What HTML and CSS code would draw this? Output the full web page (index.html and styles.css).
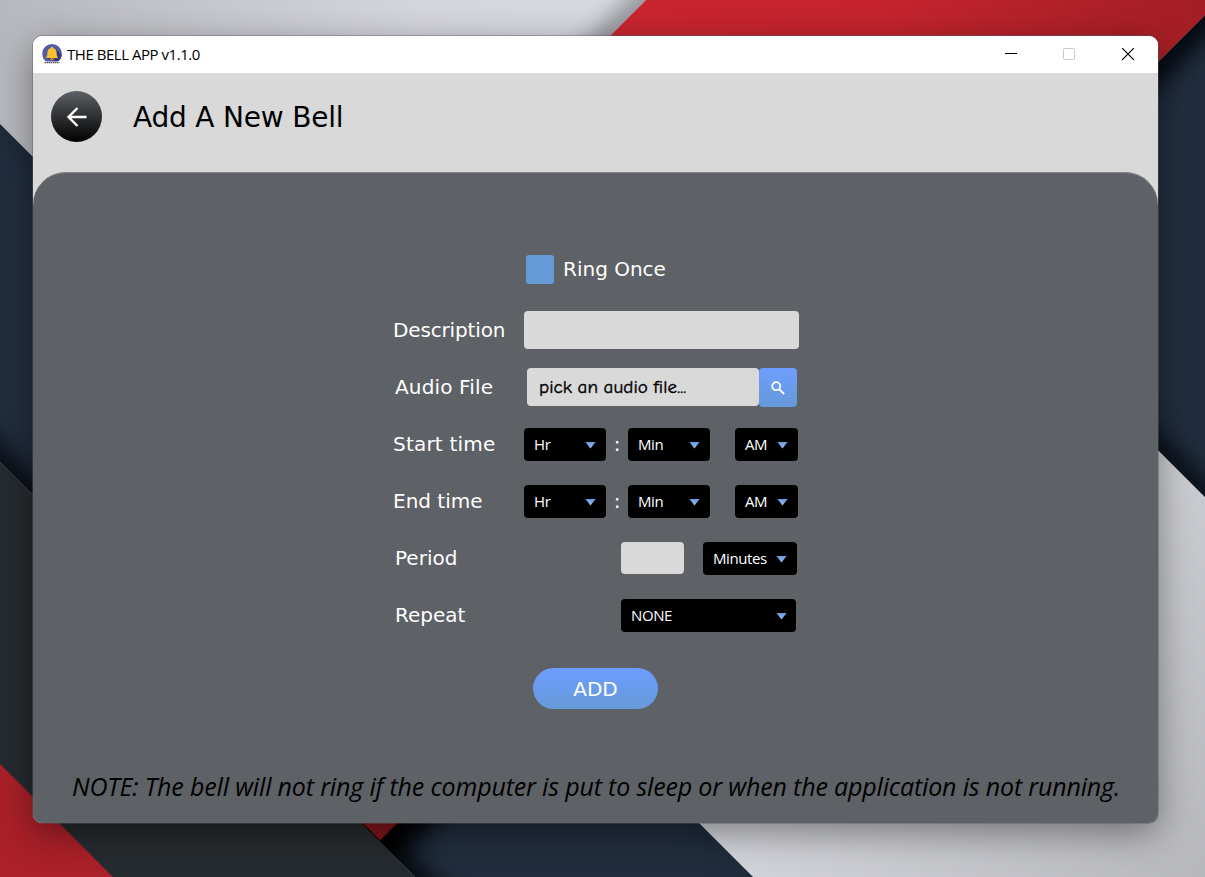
FILE: index.html
```html
<!DOCTYPE html>
<html lang="en">
<head>
<meta charset="utf-8">
<title>THE BELL APP v1.1.0</title>
<link rel="stylesheet" href="styles.css">
</head>
<body>
<svg class="wallpaper" viewBox="0 0 1205 877" aria-hidden="true">
  <defs>
    <filter id="soft" filterUnits="userSpaceOnUse" x="-100" y="-100" width="1405" height="1100" color-interpolation-filters="sRGB"><feGaussianBlur stdDeviation="12"/></filter>
    <linearGradient id="silver" x1="0" y1="0" x2="1" y2="0"><stop offset="0" stop-color="#b7b8bd"/><stop offset=".35" stop-color="#d5d6dc"/><stop offset=".55" stop-color="#d8d9df"/><stop offset="1" stop-color="#cbccd1"/></linearGradient>
    <linearGradient id="corner" gradientUnits="userSpaceOnUse" x1="1000" y1="600" x2="1205" y2="877"><stop offset="0" stop-color="#000" stop-opacity="0"/><stop offset="1" stop-color="#000" stop-opacity=".1"/></linearGradient>
    <linearGradient id="red" gradientUnits="userSpaceOnUse" x1="620" y1="0" x2="1200" y2="40"><stop offset="0" stop-color="#c8252f"/><stop offset=".45" stop-color="#c5242e"/><stop offset="1" stop-color="#a31e26"/></linearGradient>
    <clipPath id="navyLeft"><path d="M0 124L753 877H415L0 462z"/></clipPath>
    <clipPath id="navyRight"><path d="M1205 15V497L700 -8V520z"/></clipPath>
    <clipPath id="silverTop"><path d="M0 0H646L0 646z"/></clipPath>
  </defs>
  <rect width="1205" height="877" fill="url(#silver)"/>
  <rect x="600" y="400" width="605" height="477" fill="url(#corner)"/>
  <g clip-path="url(#silverTop)"><path d="M700 -54L0 646" stroke="#44464c" stroke-opacity=".7" stroke-width="18" filter="url(#soft)"/></g>
  <path d="M0 124L753 877H415L0 462z" fill="#222e3f"/>
  <g clip-path="url(#navyLeft)">
    <path d="M-60 402L475 937" stroke="#05070b" stroke-width="24" filter="url(#soft)"/>
    <path d="M-60 64L813 937" stroke="#0c1722" stroke-opacity=".35" stroke-width="12" filter="url(#soft)"/>
    <path d="M430 790L330 890" stroke="#000" stroke-width="50" filter="url(#soft)"/>
  </g>
  <path d="M1205 15V497L1000 292V220z" fill="#222e3f"/>
  <g clip-path="url(#navyRight)">
    <path d="M1260 -40L1000 220" stroke="#03060b" stroke-width="32" filter="url(#soft)"/>
    <path d="M1000 292L1270 562" stroke="#03060b" stroke-width="22" filter="url(#soft)"/>
  </g>
  <path d="M646 0H1220L380 840L200 660L200 446z" fill="url(#red)"/>
  <path class="red-shade" d="M350 820H402L380 842z"/>
  <path d="M0 462L415 877H0z" fill="#262b2f"/>
  <path d="M0 764L113 877H0z" fill="#ab2029"/>
</svg>

<main class="window">
  <header class="titlebar">
    <svg class="app-icon" viewBox="0 0 20 20">
      <circle cx="10" cy="9.8" r="9.8" fill="#525ba5"/>
      <path d="M13 4.5L19.8 11a9.8 9.8 0 0 1-5 7.2L4 14z" fill="#353c78"/>
      <path d="M10 2.800a1.200 1.200 0 0 1 1.200 1.200c2.400.6 3.400 2.400 3.400 5 0 2.500.6 3.700 1.700 5H3.700C4.800 12.700 5.400 11.500 5.400 9c0-2.600 1-4.400 3.400-5A1.200 1.200 0 0 1 10 2.800z" fill="#fbbf32"/>
      <path d="M8 14.500h4a2 1.500 0 0 1-4 0z" fill="#e9a51f"/>
      <path d="M2 17.400h16v2.600H2z" fill="#fff"/>
      <path d="M2.500 18.600h15" stroke="#555" stroke-width="1.200" stroke-dasharray="1.500 .5"/>
    </svg>
    <span class="app-name">THE BELL APP v1.1.0</span>
    <div class="controls">
      <svg viewBox="0 0 14 14"><path d="M1 6.500h12" stroke="#000"/></svg>
      <svg viewBox="0 0 14 14"><rect x="1.500" y="1.500" width="11" height="11" rx=".8" fill="none" stroke="#c8c8c8"/></svg>
      <svg viewBox="0 0 14 14"><path d="M1.200 1.200L12.800 12.800M12.800 1.200L1.200 12.800" stroke="#000" stroke-width="1.200"/></svg>
    </div>
  </header>

  <div class="page-head">
    <button class="back" aria-label="Back">
      <svg viewBox="0 0 22 22"><path d="M20.500 11H2.500M11.500 2L2.500 11L11.500 20" fill="none" stroke="#fff" stroke-width="2.400"/></svg>
    </button>
    <h1 class="page-title">Add A New Bell</h1>
  </div>

  <section class="panel">
    <form class="form">
      <div class="ring"><span class="check"></span><span class="ring-label">Ring Once</span></div>
      <div class="row"><label class="label tight">Description</label><span class="field description"></span></div>
      <div class="row"><label class="label label-in2">Audio File</label><span class="field audio">pick an audio file...</span><span class="search"><svg viewBox="0 0 14 14"><circle cx="5.200" cy="5.200" r="4" fill="none" stroke="#fff" stroke-width="1.700"/><path d="M8.200 8.200L13.200 13.200" stroke="#fff" stroke-width="1.900"/></svg></span></div>
      <div class="row"><label class="label loose">Start time</label><span class="combo w82">Hr</span><span class="colon">:</span><span class="combo w82">Min</span><span class="combo ampm">AM</span></div>
      <div class="row"><label class="label">End time</label><span class="combo w82">Hr</span><span class="colon">:</span><span class="combo w82">Min</span><span class="combo ampm">AM</span></div>
      <div class="row"><label class="label wide">Period</label><span class="field period"></span><span class="combo unit">Minutes</span></div>
      <div class="row"><label class="label wide">Repeat</label><span class="combo repeat">NONE</span></div>
    </form>
    <button class="add">ADD</button>
    <p class="note">NOTE: The bell will not ring if the computer is put to sleep or when the application is not running.</p>
  </section>
</main>
</body>
</html>
```
FILE: styles.css
```css
* { box-sizing: border-box; }
body { margin: 0; width: 1205px; height: 877px; overflow: hidden; padding: 36px 47px 53px 33px; background: #222e3f; }
.wallpaper { position: absolute; inset: 0; width: 1205px; height: 877px; }
.red-shade { fill: #3c0508; opacity: .5; }
.window { position: relative; width: 1125px; height: 787px; border-radius: 9px; background: #d9d9d9; overflow: hidden;
  box-shadow: 0 0 0 1px rgba(90, 92, 96, .4), 0 10px 36px rgba(0, 0, 0, .42); }

.titlebar { height: 37px; background: #fff; display: flex; align-items: center; padding: 0 23px 2px 9px; }
.app-icon { width: 20px; height: 20px; }
.app-name { margin-left: 5px; font: 15px/20px "Open Sans", sans-serif; letter-spacing: -.46px; color: #000; white-space: nowrap; }
.controls { margin-left: auto; display: flex; gap: 44.500px; }
.controls svg { width: 14px; height: 14px; }
.controls svg:nth-child(2) { margin: 0 .5px 0 -.5px; }

.page-head { height: 99px; display: flex; padding: 18px 18px 0; }
.back { width: 51px; height: 51px; border: 0; border-radius: 50%; padding: 0; display: grid; place-items: center; background: linear-gradient(#5d6165, #000); }
.back svg { width: 22px; height: 22px; }
.page-title { margin: 0 0 0 31px; font: 400 28px/53px "DejaVu Sans", sans-serif; letter-spacing: -.2px; color: #000; white-space: nowrap; }

.panel { height: 651px; background: #5e6165; border-radius: 33px 33px 0 0; padding: 72px 0 0 0; box-shadow: inset 0 1px 0 #85878a; }
.form { margin-left: 360px; width: 420px; }
.ring { height: 57px; display: flex; padding-left: 133px; }
.check { width: 28px; height: 29px; margin-top: 11px; border-radius: 3px; background: #6699d8; }
.ring-label { margin-left: 9px; line-height: 50px; font-family: "DejaVu Sans", sans-serif; font-size: 20px; color: #fff; }
.row { height: 57px; display: flex; align-items: flex-start; }
.label { width: 131px; flex: none; font: 20px/59px "DejaVu Sans", sans-serif; color: #fff; white-space: nowrap; }
.tight { letter-spacing: -.15px; }
.loose { letter-spacing: .2px; }
.label-in2 { width: 134px; padding-left: 2px; letter-spacing: .15px; }
.wide { width: 228px; padding-left: 2px; }
.field { background: #d9d9d9; border-radius: 4px; flex: none; }
.description { width: 275px; height: 38px; margin-top: 10px; }
.audio { width: 232px; height: 38px; margin-top: 10px; padding-left: 12px; font: 400 19px/38px "Comic Sans MS", "Comic Neue", Lato, sans-serif; letter-spacing: .1px; word-spacing: -1px; -webkit-text-stroke: .4px #000; color: #000; white-space: nowrap; }
.search { width: 38px; height: 39px; margin-top: 10px; border-radius: 4px; background: linear-gradient(#6f9dff, #6699d8); display: grid; place-items: center; }
.search svg { width: 14px; height: 14px; }
.combo { height: 33px; margin-top: 13px; flex: none; border-radius: 4px; background: #000; color: #fff; font: 15px/33px "Open Sans", sans-serif; letter-spacing: -.4px; padding: 0 10px; display: flex; align-items: center; justify-content: space-between; }
.combo::after { content: ""; width: 11px; height: 7px; background: linear-gradient(#6699e0, #9cc3ee); clip-path: polygon(0 0, 100% 0, 50% 100%); margin-top: 1px; }
.colon { width: 22px; text-align: center; font: 20px/59px "DejaVu Sans", sans-serif; color: #fff; }
.w82 { width: 82px; }
.ampm { width: 63px; margin-left: 25px; }
.period { width: 63px; height: 32px; margin-top: 13px; }
.unit { width: 94px; margin-left: 19px; }
.repeat { width: 175px; padding-right: 9px; }
.add { display: block; width: 125px; height: 41px; margin: 25px 0 0 500px; border: 0; padding: 1px 0 0; border-radius: 21px; background: linear-gradient(#6f9dff, #6699d8); color: #fff; font: 20px/41px "DejaVu Sans", sans-serif; }
.note { margin: 57px 0 0 39px; font: italic 25px/40px "Open Sans", sans-serif; letter-spacing: -.165px; color: #000; white-space: nowrap; }
```
